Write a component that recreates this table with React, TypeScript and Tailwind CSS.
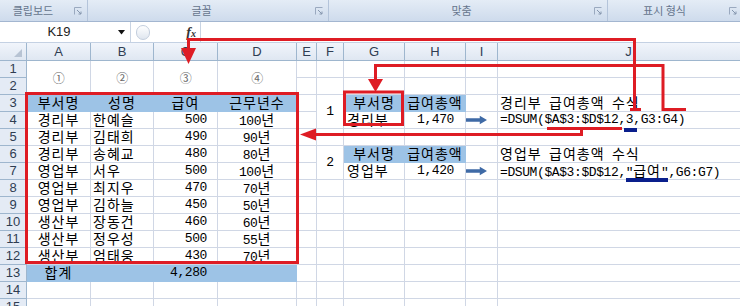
import React from "react";

// 한글 구간만 CJK 폰트로, 나머지는 고정폭으로
const HANGUL = /([\uAC00-\uD7A3]+)/;

function T({ s }: { s: string }) {
  return (
    <span className="whitespace-pre">
      {s.split(HANGUL).map((p, i) =>
        HANGUL.test(p) ? (
          <span key={i} className="font-['Noto_Sans_CJK_KR',sans-serif] text-[14px] tracking-[1px]">
            {p}
          </span>
        ) : (
          p
        )
      )}
    </span>
  );
}

function Mark({ children, bar }: { children: React.ReactNode; bar: string }) {
  return (
    <span className="relative inline-block leading-[16px]">
      {children}
      <span className={`absolute top-[16px] h-[4px] bg-[#0a1f8c] ${bar}`} />
    </span>
  );
}

function BlueArrow() {
  return (
    <svg width="29" height="12" viewBox="0 0 29 12">
      <path d="M0 3.5H19V0L29 6L19 12V8.5H0Z" fill="#3f6aa6" />
    </svg>
  );
}

function Launcher() {
  return (
    <svg width="8" height="8" viewBox="0 0 8 8" className="shrink-0">
      <path d="M0.5 7.5V0.5H7.5" stroke="#9aa9bf" fill="none" />
      <path d="M3 3L7 7M7 4.5V7H4.5" stroke="#8596ae" fill="none" />
    </svg>
  );
}

type Cell = {
  v?: React.ReactNode;
  a?: "l" | "c" | "r";
  fill?: boolean;
  span?: boolean;
  cls?: string;
};

const COLS = ["A", "B", "C", "D", "E", "F", "G", "H", "I", "J"];

const people: [string, string, string, string][] = [
  ["경리부", "한예슬", "500", "100년"],
  ["경리부", "김태희", "490", "90년"],
  ["경리부", "송혜교", "480", "80년"],
  ["영업부", "서우", "500", "100년"],
  ["영업부", "최지우", "470", "70년"],
  ["영업부", "김하늘", "450", "50년"],
  ["생산부", "장동건", "460", "60년"],
  ["생산부", "정우성", "500", "55년"],
  ["생산부", "엄태웅", "430", "70년"],
];

const circled = (ch: string) => (
  <span className="font-['Noto_Sans_CJK_KR',sans-serif] text-[12px] text-[#6a6a6a]">{ch}</span>
);

const cells: Record<string, Cell> = {
  A1: { v: circled("①"), a: "c", span: true },
  B1: { v: circled("②"), a: "c", span: true },
  C1: { v: circled("③"), a: "c", span: true },
  D1: { v: circled("④"), a: "c", span: true },

  A3: { v: <T s="부서명" />, a: "c", fill: true },
  B3: { v: <T s="성명" />, a: "c", fill: true },
  C3: { v: <T s="급여" />, a: "c", fill: true },
  D3: { v: <T s="근무년수" />, a: "c", fill: true },
  F3: { v: "1", a: "c", span: true },
  G3: { v: <T s="부서명" />, a: "c", fill: true },
  H3: { v: <T s="급여총액" />, a: "c", fill: true },
  J3: { v: <T s="경리부 급여총액 수식" />, a: "l" },
  G4: { v: <T s="경리부" />, a: "l", cls: "pl-[3px]" },
  H4: { v: "1,470", a: "r", cls: "pr-[11px]" },
  I4: { v: <BlueArrow />, a: "r", cls: "pr-0" },
  J4: {
    v: (
      <span>
        =DSUM($A$3:$D$12,<Mark bar="-left-[2px] -right-[4px]">3</Mark>,G3:G4)
      </span>
    ),
    a: "l",
  },

  F6: { v: "2", a: "c", span: true },
  G6: { v: <T s="부서명" />, a: "c", fill: true },
  H6: { v: <T s="급여총액" />, a: "c", fill: true },
  J6: { v: <T s="영업부 급여총액 수식" />, a: "l" },
  G7: { v: <T s="영업부" />, a: "l", cls: "pl-[3px]" },
  H7: { v: "1,420", a: "r", cls: "pr-[11px]" },
  I7: { v: <BlueArrow />, a: "r", cls: "pr-0" },
  J7: {
    v: (
      <span>
        =DSUM($A$3:$D$12,
        <Mark bar="left-0 right-0">
          "<T s="급여" />"
        </Mark>
        ,G6:G7)
      </span>
    ),
    a: "l",
  },

  A13: { v: <T s="합계" />, a: "c", fill: true },
  B13: { fill: true },
  C13: { v: "4,280", a: "r", fill: true },
  D13: { fill: true },
};

people.forEach(([dept, name, pay, years], i) => {
  const r = i + 4;
  cells["A" + r] = { v: <T s={dept} />, a: "c" };
  cells["B" + r] = { v: <T s={name} />, a: "l" };
  cells["C" + r] = { v: pay, a: "r" };
  cells["D" + r] = { v: <T s={years} />, a: "c" };
});

// 병합으로 가려지는 셀
const covered = new Set(["A2", "B2", "C2", "D2", "F4", "F7"]);

const alignCls = {
  l: "justify-start pl-[2px]",
  c: "justify-center",
  r: "justify-end pr-[10px]",
};

export default function App() {
  const rows = Array.from({ length: 15 }, (_, i) => i + 1);

  return (
    <div className="relative w-[740px] h-[306px] overflow-hidden bg-white">
      {/* 리본 그룹 이름 */}
      <div className="flex h-[22px] border-b border-[#a3b6d0] bg-linear-to-b from-[#e4ecf6] to-[#cedbec] font-['Noto_Sans_CJK_KR',sans-serif] text-[11px] text-[#66758d]">
        <div className="flex w-[88px] items-center border-r border-[#b4c4da] pr-[5px]">
          <span className="flex-1 text-center pr-[8px]">클립보드</span>
          <Launcher />
        </div>
        <div className="flex w-[241px] items-center border-r border-[#b4c4da] pr-[5px]">
          <span className="flex-1 text-center">글꼴</span>
          <Launcher />
        </div>
        <div className="flex w-[279px] items-center border-r border-[#b4c4da] pr-[5px]">
          <span className="flex-1 text-center">맞춤</span>
          <Launcher />
        </div>
        <div className="flex flex-1 items-center pr-[3px]">
          <span className="flex-1 text-center pr-[8px]">표시 형식</span>
          <Launcher />
        </div>
      </div>

      {/* 수식 입력줄 */}
      <div className="flex h-[21px] border-b border-[#c4d1e3] bg-white">
        <div className="flex w-[131px] items-center border-r border-[#c9d4e3]">
          <span className="w-[118px] text-center font-['Liberation_Sans',sans-serif] text-[13px] text-[#222]">
            K19
          </span>
          <svg width="8" height="5" viewBox="0 0 8 5">
            <path d="M0 0H7L3.5 4.5Z" fill="#111" />
          </svg>
        </div>
        <div className="flex w-[69px] items-center">
          <div className="ml-[5px] h-[15px] w-[14px] rounded-full border border-[#c3cedd] bg-linear-to-b from-white to-[#dfe6ef]" />
          <span className="ml-auto mr-[4px] font-['Liberation_Serif',serif] text-[14px] font-bold italic text-[#333]">
            f<span className="text-[10px]">x</span>
          </span>
        </div>
        <div className="flex-1 border-l border-[#c9d4e3]" />
      </div>

      {/* 시트 */}
      <div className="grid grid-cols-[27px_64px_63px_64px_79px_20px_27px_61px_61px_32px_262px] grid-rows-[18px_repeat(15,17px)] font-['Liberation_Mono',monospace] text-[13px] leading-[16px] tracking-[-0.4px] text-black">
        {/* 열 머리글 */}
        <div className="relative border-r border-b border-[#9eb6ce] bg-linear-to-b from-[#f1f5fb] to-[#dfe7f2]">
          <svg width="8" height="8" viewBox="0 0 8 8" className="absolute right-[4px] bottom-[3px]">
            <path d="M8 0V8H0Z" fill="#b7c3d3" />
          </svg>
        </div>
        {COLS.map((c) => (
          <div
            key={c}
            className="flex items-center justify-center border-r border-b border-[#9eb6ce] bg-linear-to-b from-[#f1f5fb] to-[#dfe7f2] font-['Liberation_Sans',sans-serif] text-[13px] tracking-normal text-[#2f3d52]"
          >
            {c}
          </div>
        ))}

        {rows.map((r) => (
          <React.Fragment key={r}>
            <div className="flex items-center justify-center border-r border-b border-[#9eb6ce] bg-[#e4ebf5] font-['Liberation_Sans',sans-serif] text-[13px] tracking-normal text-[#2f3d52]">
              {r}
            </div>
            {COLS.map((c) => {
              const id = c + r;
              if (covered.has(id)) return null;
              const cell = cells[id] ?? {};
              return (
                <div
                  key={id}
                  className={[
                    "flex items-center whitespace-nowrap border-r border-b",
                    cell.fill ? "bg-[#9dc3e6] border-[#9dc3e6]" : "border-[#d0d7e5]",
                    cell.span ? "row-span-2" : "",
                    alignCls[cell.a ?? "l"],
                    cell.cls ?? "",
                  ].join(" ")}
                >
                  {cell.v}
                </div>
              );
            })}
          </React.Fragment>
        ))}
      </div>

      {/* 빨간 주석 선 */}
      <svg
        width="740"
        height="306"
        viewBox="0 0 740 306"
        className="pointer-events-none absolute left-0 top-0"
        fill="none"
        stroke="#de1c24"
        strokeWidth="3"
      >
        <rect x="26.5" y="93.5" width="271" height="169" />
        <rect x="344.5" y="92" width="58" height="32.5" />
        <path d="M314 134.5H581.5V128.5M547 128.5H622" />
        <polygon points="300,134.5 316,128.5 316,140.5" fill="#de1c24" stroke="none" />
        <path d="M188.5 49V39.5H634.5V109.5M630 109.5H641" />
        <polygon points="181,48 196,48 188.5,64" fill="#de1c24" stroke="none" />
        <path d="M375.5 80V65.5H663V109.5H686" />
        <polygon points="368,79 383,79 375.5,92" fill="#de1c24" stroke="none" />
      </svg>
    </div>
  );
}
